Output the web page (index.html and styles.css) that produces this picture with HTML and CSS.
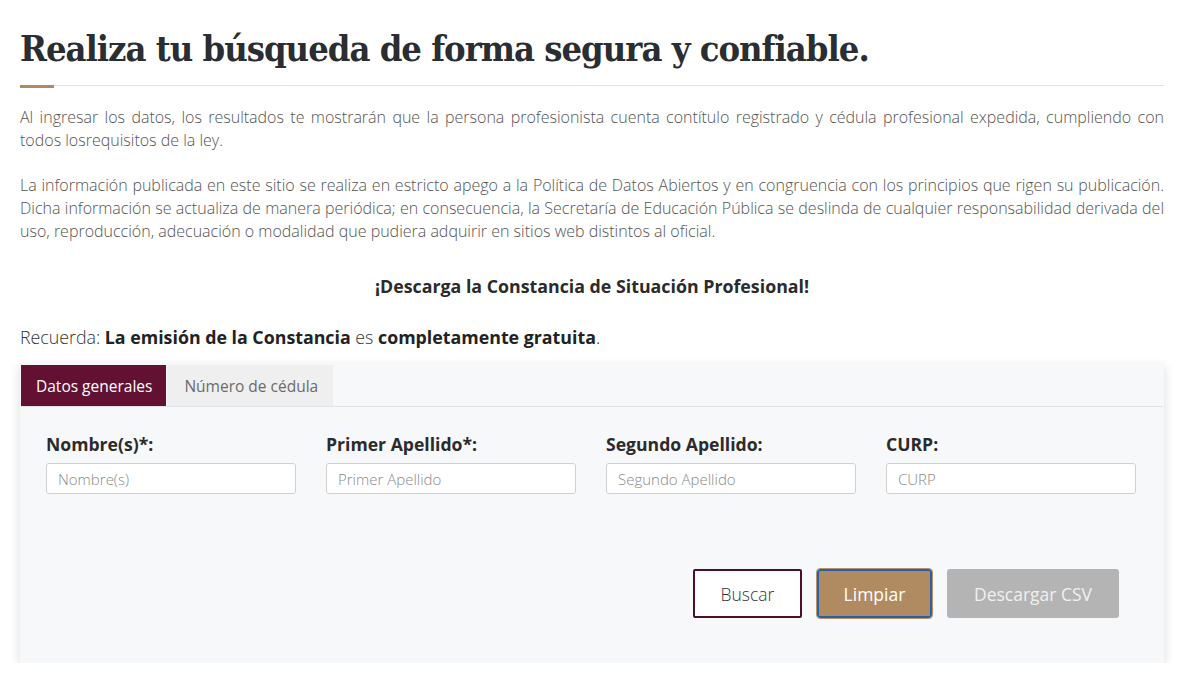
FILE: index.html
```html
<!DOCTYPE html>
<html lang="es">
<head>
<meta charset="utf-8">
<title>Realiza tu búsqueda</title>
<link rel="stylesheet" href="styles.css">
</head>
<body>
<main class="page">
  <h1 class="title">Realiza tu búsqueda de forma segura y confiable.</h1>
  <div class="rule"></div>
  <p class="text">Al ingresar los datos, los resultados te mostrarán que la persona profesionista cuenta contítulo registrado y cédula profesional expedida, cumpliendo con todos losrequisitos de la ley.</p>
  <p class="text">La información publicada en este sitio se realiza en estricto apego a la Política de Datos Abiertos y en congruencia con los principios que rigen su publicación. Dicha información se actualiza de manera periódica; en consecuencia, la Secretaría de Educación Pública se deslinda de cualquier responsabilidad derivada del uso, reproducción, adecuación o modalidad que pudiera adquirir en sitios web distintos al oficial.</p>
  <p class="cta">¡Descarga la Constancia de Situación Profesional!</p>
  <p class="remember">Recuerda: <strong>La emisión de la Constancia</strong> es <strong>completamente gratuita</strong>.</p>

  <section class="panel">
    <div class="tabs">
      <div class="tab active">Datos generales</div>
      <div class="tab">Número de cédula</div>
    </div>
    <form class="form">
      <div class="fields">
        <label class="field"><span class="label">Nombre(s)*:</span><input class="input" type="text" placeholder="Nombre(s)"></label>
        <label class="field"><span class="label">Primer Apellido*:</span><input class="input" type="text" placeholder="Primer Apellido"></label>
        <label class="field"><span class="label">Segundo Apellido:</span><input class="input" type="text" placeholder="Segundo Apellido"></label>
        <label class="field"><span class="label">CURP:</span><input class="input" type="text" placeholder="CURP"></label>
      </div>
      <div class="actions">
        <button type="button" class="btn btn-outline">Buscar</button>
        <button type="button" class="btn btn-gold">Limpiar</button>
        <button type="button" class="btn btn-disabled">Descargar CSV</button>
      </div>
    </form>
  </section>
</main>
</body>
</html>
```
FILE: styles.css
```css
* { box-sizing: border-box; }
html, body { margin: 0; padding: 0; background: #fff; }
body { font-family: "Open Sans", "Noto Sans", sans-serif; color: #333; }

.page {
  width: 1144px;
  margin-left: 20px;
  padding-top: 24px;
}

.title {
  margin: 0;
  font-family: "DejaVu Serif", "Liberation Serif", serif;
  font-stretch: condensed;
  font-weight: 700;
  font-size: 36px;
  line-height: 48px;
  color: #2a2d31;
  letter-spacing: -1px;
}

.rule {
  margin-top: 13px;
  height: 3px;
  background:
    linear-gradient(#b08a5e, #b08a5e) left top / 34px 3px no-repeat,
    linear-gradient(#e3e3e3, #e3e3e3) left 0 / 100% 1px no-repeat;
}

.text {
  margin: 18px 0 0;
  font-weight: 300;
  font-size: 16px;
  line-height: 23px;
  color: #545454;
  text-align: justify;
}
.text + .text { margin-top: 22px; }

.cta {
  margin: 31px 0 0;
  text-align: center;
  font-weight: 700;
  font-size: 17.8px;
  line-height: 25px;
  color: #2b2b2b;
}

.remember {
  margin: 26px 0 0;
  font-weight: 300;
  font-size: 17.8px;
  line-height: 25px;
  color: #333;
}
.remember strong { font-weight: 700; color: #222; }

.panel {
  margin-top: 13px;
  height: 300px;
  background: #f7f8fa;
  padding: 2px 1px 0;
  box-shadow: 0 4px 10px rgba(0,0,0,0.15);
}

.tabs {
  display: flex;
  border-bottom: 1px solid #e1e2e4;
}
.tab {
  height: 41px;
  padding: 0 15px 0 17px;
  display: flex;
  align-items: center;
  font-size: 15.5px;
  font-weight: 400;
  color: #6b6b6b;
  background: #efefef;
  margin-right: 1px;
}
.tab.active {
  padding: 0 14px 0 15px;
  background: #621132;
  color: #fff;
}

.form { padding: 25px 25px 0; }

.fields {
  display: grid;
  grid-template-columns: repeat(4, 250px);
  column-gap: 30px;
}
.field { display: flex; flex-direction: column; }
.label {
  font-size: 17.6px;
  font-weight: 700;
  line-height: 24px;
  color: #2b2b2b;
}
.input {
  margin-top: 7px;
  height: 31px;
  width: 250px;
  border: 1px solid #d0d0d0;
  border-radius: 3px;
  background: #fff;
  padding: 0 11px;
  font-family: "Open Sans", sans-serif;
  font-weight: 300;
  font-size: 15px;
  color: #555;
}
.input::placeholder { color: #8a8a8a; }

.actions {
  display: flex;
  justify-content: flex-end;
  gap: 15px;
  margin-top: 75px;
  padding-right: 19px;
}
.btn {
  height: 49px;
  font-family: "Open Sans", sans-serif;
  font-size: 17.5px;
  font-weight: 300;
  border-radius: 2px;
  cursor: pointer;
}
.btn-outline {
  width: 109px;
  background: #fff;
  color: #333;
  border: 2px solid #4e0e24;
}
.btn-gold {
  width: 115px;
  background: #b08b62;
  color: #fff;
  border: 2px solid #2b5fa8;
  outline: 1px solid #b9936a;
  border-radius: 3px;
  font-weight: 400;
}
.btn-disabled {
  width: 172px;
  background: #b4b4b4;
  color: #f0f0f0;
  border: none;
  border-radius: 3px;
  font-weight: 400;
}
```
